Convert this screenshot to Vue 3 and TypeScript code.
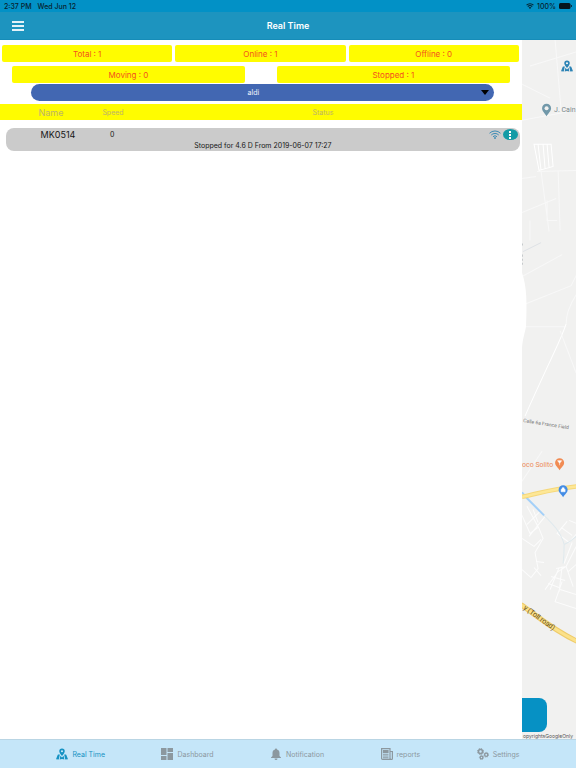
<script setup lang="ts">
import { ref } from 'vue'

interface Vehicle {
  name: string
  speed: number
  status: string
}

type TabIcon = 'map' | 'grid' | 'bell' | 'news' | 'gears'

const overall = ['Total : 1', 'Online : 1', 'Offline : 0']
const motion = ['Moving : 0', 'Stopped : 1']
const groups = ['aldi']
const group = ref('aldi')
const vehicles: Vehicle[] = [
  { name: 'MK0514', speed: 0, status: 'Stopped for 4.6 D From 2019-06-07 17:27' },
]
const tabs: { label: string; icon: TabIcon }[] = [
  { label: 'Real Time', icon: 'map' },
  { label: 'Dashboard', icon: 'grid' },
  { label: 'Notification', icon: 'bell' },
  { label: 'reports', icon: 'news' },
  { label: 'Settings', icon: 'gears' },
]
const active = ref('Real Time')

const pinPath =
  'M12 1a5.500 5.500 0 0 1 5.500 5.500c0 3-2.500 5.500-5.500 9.500-3-4-5.500-6.500-5.500-9.500A5.500 5.500 0 0 1 12 1zm0 3.300a2.200 2.200 0 1 0 0 4.400 2.200 2.200 0 0 0 0-4.400z'
const foldPath =
  'M3.500 13.500L6.500 12.500l1 1.500-2 9-5.500-.5zM8.800 15.500L12 19l3.200-3.500 1.500 7.500-4.700-1-4.700 1zM17.500 12.500l3 1L24 22.500l-5.500.5-2-9z'
</script>

<template>
  <div class="app">
    <div class="status-bar">
      <span>2:37 PM</span>
      <span class="date">Wed Jun 12</span>
      <svg class="sb-wifi" viewBox="0 0 16 12" aria-hidden="true">
        <path d="M1.2 4.4a9.8 9.8 0 0 1 13.6 0M3.6 7.1a6.3 6.3 0 0 1 8.8 0" fill="none" stroke="#08222e" stroke-width="2.2" />
        <path d="M5.4 9.2a3.8 3.8 0 0 1 5.2 0L8 12z" fill="#08222e" />
      </svg>
      <span class="pct">100%</span>
      <svg class="battery" viewBox="0 0 26 12" aria-hidden="true">
        <rect x="0" y="0" width="23" height="12" rx="3" fill="#06151c" />
        <path d="M24 4a2 2 0 0 1 0 4z" fill="#06151c" />
      </svg>
    </div>

    <header class="header">
      <button class="menu" aria-label="Menu"><i></i><i></i><i></i></button>
      <h1>Real Time</h1>
    </header>

    <main class="content">
      <section class="panel">
        <div class="row overall">
          <button v-for="s in overall" :key="s" class="stat">{{ s }}</button>
        </div>
        <div class="row motion">
          <button v-for="s in motion" :key="s" class="stat">{{ s }}</button>
        </div>
        <div class="picker">
          <select v-model="group" aria-label="Group">
            <option v-for="g in groups" :key="g" :value="g">{{ g }}</option>
          </select>
          <svg class="caret" viewBox="0 0 8 5" aria-hidden="true"><path d="M0 0h8L4 5z" /></svg>
        </div>

        <table class="vehicles">
          <thead>
            <tr>
              <th class="name">Name</th>
              <th class="speed">Speed</th>
              <th class="state">Status</th>
            </tr>
          </thead>
          <tbody>
            <tr v-for="v in vehicles" :key="v.name">
              <td class="name">{{ v.name }}</td>
              <td class="speed">{{ v.speed }}</td>
              <td class="actions">
                <svg class="wifi" viewBox="0 0 24 18" aria-hidden="true">
                  <g fill="none" stroke="#3f8cb5" stroke-width="2">
                    <path d="M1 6.500a15.600 15.600 0 0 1 22 0" />
                    <path d="M4.500 10a10.600 10.600 0 0 1 15 0" />
                    <path d="M8 13.400a5.700 5.700 0 0 1 8 0" />
                  </g>
                  <circle cx="12" cy="16" r="1.900" fill="#3f8cb5" />
                </svg>
                <button class="more" aria-label="More options"><i></i><i></i><i></i></button>
              </td>
              <td class="detail">{{ v.status }}</td>
            </tr>
          </tbody>
        </table>
      </section>

      <aside class="map">
        <svg class="tiles" viewBox="522 40 54 699" preserveAspectRatio="xMinYMin slice" role="img" aria-label="Map">
          <rect x="522" y="40" width="400" height="900" fill="#f1f1f0" />
          <g fill="none" stroke="#f8f8f8" stroke-width="1">
            <path d="M522 84l28 14M530 66l46-14M522 120l54-10M555 40l6 70M522 178l14-2M537 171l39-1M541 171l8 60M558 170l2 60M522 212l34-14M547 200v20h10M530 220v20M522 276l40-22M526 303l45-18 5-10M524 326h42M522 480l20-30" />
            <path d="M534 144h17l2 22-14 4zM538 144l3 26M543 144l2 24M547 144l2 23" stroke="#fff" />
            <path d="M566 323c-4 12-9 22-15 35s-19 41-26 57" stroke="#fff" />
            <path d="M576 294c-7 11-10 20-10 29M560 330l16 42" />
          </g>
          <path d="M522 272c5 14 5 31 4 54-2 10-4 14-4 24" fill="#fff" />
          <path d="M523 251l18-9" stroke="#dde1e5" fill="none" />
          <path d="M522 243v3M522 254v12" stroke="#9ca3a7" stroke-dasharray="2 2" />

          <g fill="none" stroke="#fcfcfc" stroke-width="1">
            <path d="M527 505l12 22 4 10-8 14 3 16-7 9-9-8M522 514l8 18 8-6M533 508l5 13M540 510l-13 13M545 515l-16 20M522 537l12 8 7-7M536 560l8 1M534 566l7 8" />
            <path d="M567 520l-10 12 12 9 7-8M561 526l11 8M569 519l7 3M576 545l-10 20-8 5-13 18M572 541l-8 21M556 567l10-2 7 20M551 575l14 4M559 566l-9 22M548 582l11 4M562 580l-7 20 21 7M560 588l16 5M568 570l8-7M562 565l-3 25" />
          </g>
          <path d="M544 514c9 9 17 17 20 29 0 5 0 11-1 19M564 543c5-2 8-4 12-8" fill="none" stroke="#dfe9ed" />
          <path d="M522 491l5 6 17 17" fill="none" stroke="#a4d0f8" stroke-width="2" />
          <path d="M522 495.500c19-4 30-8 55-10.500" fill="none" stroke="#f5d779" stroke-width="4.500" />
          <path d="M522 495.500c19-4 30-8 55-10.500" fill="none" stroke="#fde796" stroke-width="2.500" />
          <path d="M521 603c17 12 33 26 57 37" fill="none" stroke="#eecb69" stroke-width="5" />
          <path d="M521 603c17 12 33 26 57 37" fill="none" stroke="#fbe18a" stroke-width="3" />

          <g class="place">
            <path d="M546.500 116c-2-3.500-4.500-5-4.500-8a4.500 4.500 0 0 1 9 0c0 3-2.500 4.500-4.500 8z" fill="#7198a9" />
            <circle cx="546.500" cy="108" r="2" fill="#f1f1f0" />
            <text x="554" y="112" class="grey">J. Cain</text>
            <text x="522" y="466" class="orange">oco Solito</text>
            <path d="M559.500 469c-2-3.500-4.500-4.500-4.500-7.500a4.500 4.500 0 0 1 9 0c0 3-2.500 4-4.500 7.500z" fill="#f18b53" />
            <path d="M557.500 459.500h4l-2 2.500zM559.500 461v3" fill="#fff" stroke="#fff" stroke-width=".6" />
            <path d="M563 496c-2-3.500-4.500-4.500-4.500-7.500a4.500 4.500 0 0 1 9 0c0 3-2.500 4-4.500 7.500z" fill="#438ce5" />
            <path d="M561 488h4v2.500h-4zM562 488v-1.500h2v1.500" fill="#fff" stroke="#fff" stroke-width=".5" />
            <text class="street" transform="translate(523 421) rotate(9)">Calle 6a France Field</text>
            <text class="toll" transform="translate(523 607) rotate(36)">y (Toll road)</text>
          </g>
        </svg>
        <button class="map-toggle" aria-label="Show map">
          <svg viewBox="0 0 24 24" aria-hidden="true">
            <path fill="currentColor" fill-rule="evenodd" :d="pinPath" />
            <path fill="currentColor" :d="foldPath" />
          </svg>
        </button>
        <div class="sheet"></div>
        <small class="credit">opyrightsGoogleOnly</small>
      </aside>
    </main>

    <nav class="tabs">
      <a v-for="t in tabs" :key="t.label" href="#" :class="{ active: active === t.label }" @click.prevent="active = t.label">
        <svg viewBox="0 0 24 24" aria-hidden="true">
          <g v-if="t.icon === 'map'" fill="currentColor">
            <path fill-rule="evenodd" :d="pinPath" />
            <path :d="foldPath" />
          </g>
          <path v-else-if="t.icon === 'grid'" fill="currentColor" d="M0 0h11v14H0zM13 0h11v8H13zM0 16h11v8H0zM13 10h11v14H13z" />
          <path v-else-if="t.icon === 'bell'" fill="currentColor" d="M12 1c1.200 0 2 .8 2 2 3.500 1 5 3.800 5 7v6l3 3v1H2v-1l3-3v-6c0-3.200 1.500-6 5-7 0-1.200.8-2 2-2zM9 21h6a3 3 0 0 1-6 0z" />
          <g v-else-if="t.icon === 'news'" fill="none" stroke="currentColor" stroke-width="2.400">
            <path d="M1.200 1.200h16.800v21.600H3.200a2 2 0 0 1-2-2zM18 7h4.800v14a2 2 0 0 1-4 0M4 16h11M4 19.500h11M4 12.500h11" />
            <path d="M5 5h9v4H5z" fill="currentColor" />
          </g>
          <g v-else fill="none" stroke="currentColor">
            <circle cx="7" cy="7" r="4" stroke-width="3" />
            <circle cx="7" cy="7" r="6" stroke-width="2" stroke-dasharray="2.700 2" />
            <circle cx="18.500" cy="13.500" r="3.200" stroke-width="2.800" />
            <circle cx="18.500" cy="13.500" r="4.800" stroke-width="1.500" stroke-dasharray="2 1.800" />
            <circle cx="9" cy="19" r="2.700" stroke-width="2.500" />
            <circle cx="9" cy="19" r="4.200" stroke-width="1.400" stroke-dasharray="2 1.500" />
          </g>
        </svg>
        <span>{{ t.label }}</span>
      </a>
    </nav>
  </div>
</template>

<style>
body {
  margin: 0;
}
</style>

<style scoped>
* {
  box-sizing: border-box;
}
.app {
  min-height: 100vh;
  display: flex;
  flex-direction: column;
  font-family: Inter, 'Liberation Sans', sans-serif;
  font-size: 8px;
  background: #fff;
}
button {
  border: 0;
  padding: 0;
  font: inherit;
}
.status-bar {
  height: 12px;
  padding: 0 4px;
  display: flex;
  align-items: center;
  background: #0291c6;
  color: #08222e;
  font-size: 7px;
  font-weight: 500;
}
.date {
  margin-left: 6px;
}
.sb-wifi {
  width: 8px;
  height: 6px;
  margin-left: auto;
}
.pct {
  margin: 0 3px;
}
.battery {
  width: 13px;
  height: 6px;
}
.header {
  height: 28px;
  padding: 0 12px;
  display: grid;
  grid-template-columns: 12px 1fr 12px;
  align-items: center;
  background: #1d94bf;
  color: #fff;
  border-bottom: 1px solid #168cb8;
}
.header h1 {
  margin: 0;
  text-align: center;
  font-size: 9px;
  font-weight: 600;
}
.menu {
  display: grid;
  gap: 2px;
  background: none;
}
.menu i {
  height: 2px;
  background: #e3f2f8;
}
.content {
  flex: 1;
  display: flex;
}
.panel {
  flex: 0 0 90.6%;
  padding-top: 5px;
  background: #fff;
}
.row {
  display: flex;
}
.overall {
  gap: 3px;
  padding: 0 3px 0 2px;
}
.motion {
  gap: 32px;
  padding: 0 12px;
  margin-top: 4px;
}
.stat {
  flex: 1;
  height: 17px;
  border-radius: 2px;
  background: #fffc00;
  color: #f4511e;
}
.picker {
  position: relative;
  margin: 1px 28px 0 31px;
}
.picker select {
  display: block;
  width: 100%;
  height: 17px;
  padding: 0 22px 0 4px;
  border: 0;
  border-radius: 9px;
  appearance: none;
  background: #4267b2;
  color: #f1f4fb;
  font: inherit;
  font-size: 7px;
  text-align: center;
  text-align-last: center;
}
.caret {
  position: absolute;
  right: 5px;
  top: 6px;
  width: 8px;
  height: 5px;
  pointer-events: none;
}
.vehicles {
  display: block;
  margin-top: 3px;
}
.vehicles thead,
.vehicles tbody {
  display: block;
}
.vehicles tr {
  display: grid;
  align-items: center;
}
.vehicles th,
.vehicles td {
  padding: 0;
}
.vehicles thead tr {
  grid-template-columns: 102px 22px 1fr;
  height: 16px;
  background: #fffc00;
}
.vehicles th {
  color: #bcb36a;
  font-weight: 400;
  font-size: 7px;
  text-align: center;
}
.vehicles th.name {
  font-size: 9px;
}
.vehicles tbody tr {
  grid-template-columns: 104px 4px 1fr;
  grid-template-rows: 13px 9px;
  margin: 8px 2px 0 6px;
  padding-bottom: 1px;
  border-radius: 8px;
  background: #cbcbcb;
  color: #161616;
}
.vehicles td.name {
  font-size: 9px;
  text-align: center;
}
.vehicles td.speed {
  font-size: 7px;
}
.vehicles td.detail {
  grid-column: 1 / -1;
  font-size: 7px;
  line-height: 9px;
  text-align: center;
}
.vehicles td.actions {
  display: flex;
  align-items: center;
  justify-content: flex-end;
  gap: 2px;
  padding-right: 2px;
}
.wifi {
  width: 12px;
  height: 9px;
}
.more {
  width: 15px;
  height: 11px;
  display: flex;
  flex-direction: column;
  align-items: center;
  justify-content: center;
  gap: 1px;
  border-radius: 50%;
  background: #139ba5;
}
.more i {
  width: 2px;
  height: 2px;
  background: #fff;
}
.map {
  position: relative;
  flex: 1;
  min-width: 0;
  overflow: hidden;
  background: #f1f1f0;
}
.tiles {
  position: absolute;
  width: 100%;
  height: 100%;
}
.place text {
  font-family: Roboto, 'Liberation Sans', sans-serif;
  font-size: 7px;
}
.grey {
  fill: #78868b;
}
.orange {
  fill: #ed8c5a;
}
.place .street {
  font-size: 5px;
  fill: #777;
}
.place .toll {
  fill: #654d20;
}
.map-toggle {
  position: absolute;
  top: 20px;
  right: 3px;
  width: 12px;
  height: 12px;
  background: none;
  color: #2c83b5;
}
.map-toggle svg {
  display: block;
}
.sheet {
  position: absolute;
  left: 0;
  bottom: 7px;
  width: 25px;
  height: 34px;
  border-radius: 0 8px 8px 0;
  background: #0691c4;
}
.credit {
  position: absolute;
  right: 3px;
  bottom: 0;
  color: #555;
  font-size: 5px;
  line-height: 6px;
  white-space: nowrap;
}
.tabs {
  height: 29px;
  display: flex;
  align-items: center;
  justify-content: space-evenly;
  background: #c5e6f9;
  border-top: 1px solid #b9d5e4;
}
.tabs a {
  display: flex;
  align-items: center;
  gap: 4px;
  color: #8c989f;
  font-size: 7px;
  text-decoration: none;
}
.tabs svg {
  width: 12px;
  height: 12px;
}
.tabs a.active {
  color: #1592c3;
}
</style>
